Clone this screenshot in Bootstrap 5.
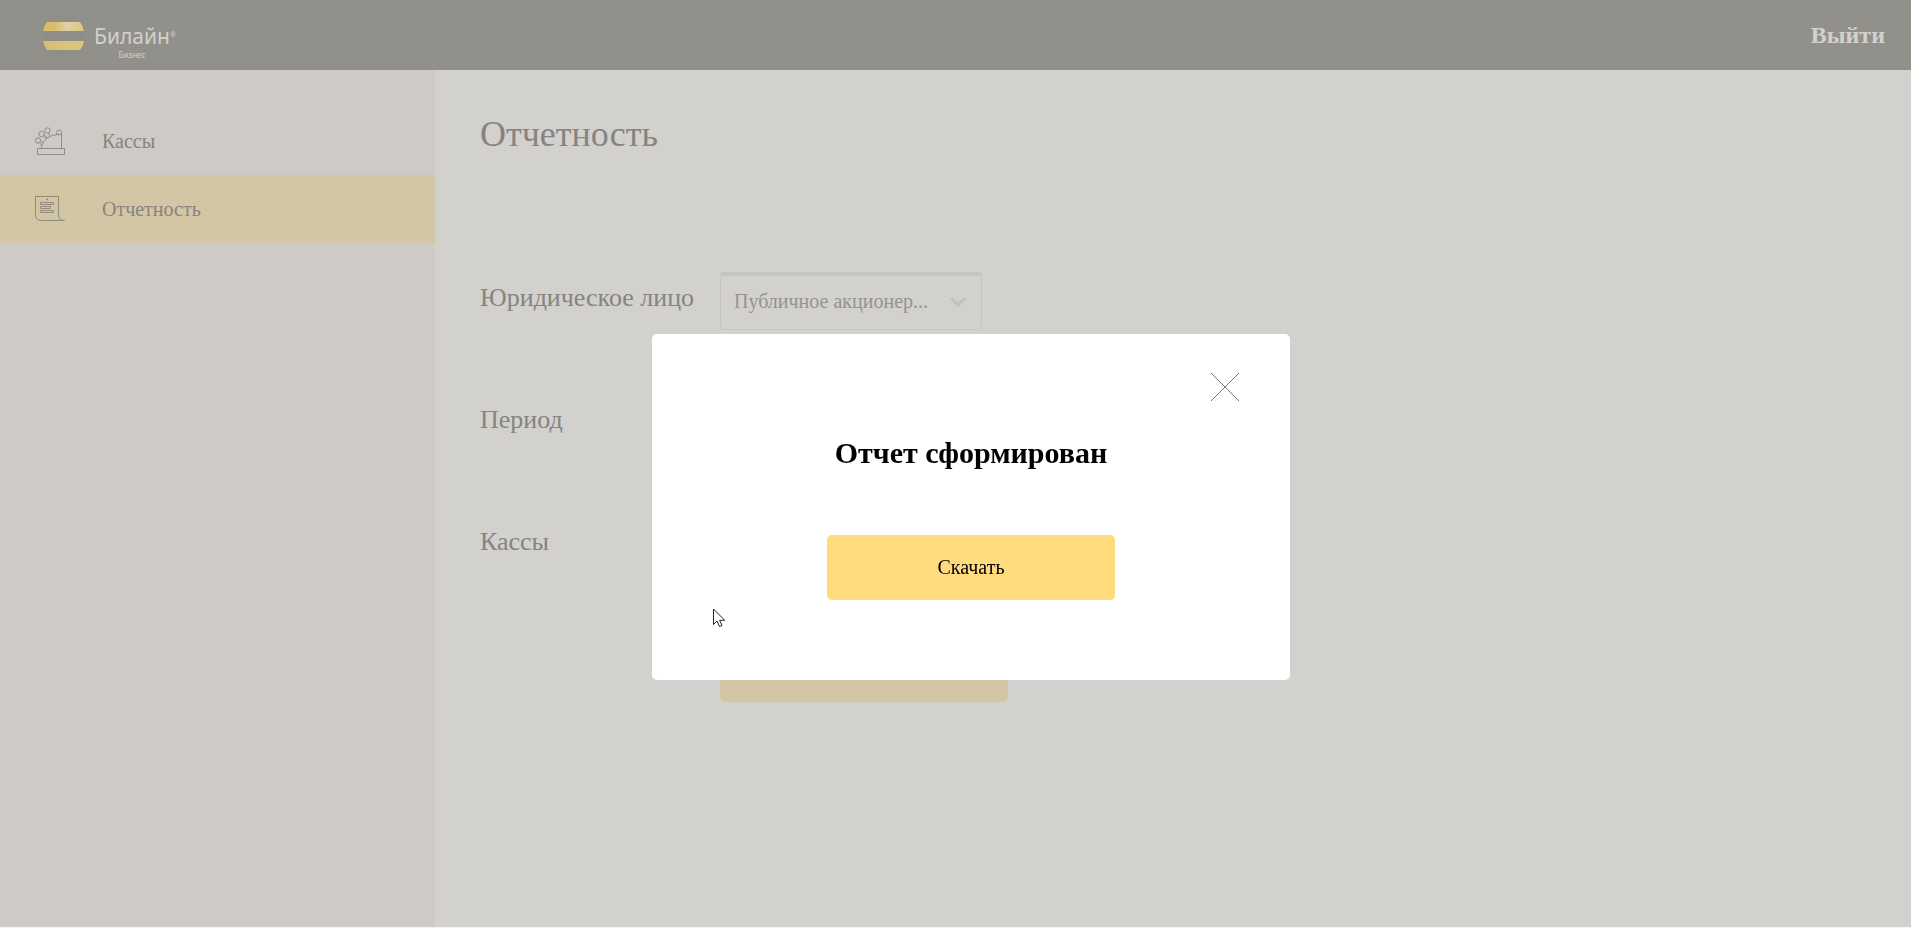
<!DOCTYPE html>
<html lang="ru">
<head>
<meta charset="utf-8">
<meta name="viewport" content="width=device-width, initial-scale=1">
<title>Отчетность</title>
<link rel="stylesheet" href="https://cdn.jsdelivr.net/npm/bootstrap@5.3.0/dist/css/bootstrap.min.css">
<style>
  body { font-family: "Liberation Serif", serif; font-size: 20px; line-height: 24px; color: #85847f; background: #d2d1cd; border-bottom: 1px solid #f4f4f2; }
  .topbar { height: 70px; background: #91908b; padding: 0 26px 0 42px; }
  .brand { color: #d2d1cd; font-family: "Noto Sans", sans-serif; gap: 9px; }
  .brand-text { padding-top: 14px; }
  .brand-name { font-size: 21px; line-height: 26px; }
  .brand-sub { font-size: 8px; line-height: 12px; }
  .brand-mark { font-size: 7px; line-height: 12px; padding-top: 6px; }
  .logout { color: #d2d1cd; font-size: 24px; line-height: 32px; }
  .sidebar { width: 435px; background: #cecac5; padding-top: 37px; }
  .side-link { height: 68px; padding-left: 34px; gap: 36px; color: #85847f; }
  .side-link:hover { color: #85847f; }
  .side-link.active { background: #d3c6a5; }
  .content { padding: 42px 45px; }
  .page-title { font-size: 36px; line-height: 44px; margin-bottom: 116px; font-weight: 400; }
  .field-row { margin-bottom: 64px; min-height: 58px; }
  .field-label { width: 240px; font-size: 26px; line-height: 32px; padding-top: 10px; }
  .field-box { width: 262px; height: 58px; color: #95948f; background-color: transparent; border: 1px solid #c6c5c0; border-top-width: 4px; border-radius: 4px; font-size: 20px; padding: 0 44px 4px 13px; }
  select.field-box { background-image: url("data:image/svg+xml,%3Csvg xmlns='http://www.w3.org/2000/svg' viewBox='0 0 16 16' fill='none' stroke='%23c1c0bb' stroke-width='3'%3E%3Cpath d='M1 3l7 7 7-7'/%3E%3C/svg%3E"); background-position: right 15px center; background-size: 16px; }
  .btn-yellow { width: 288px; height: 65px; border: 0; border-radius: 5px; font-size: 20px; padding-bottom: 2px; background: #ffdb7d; color: #000; }
  .btn-muted { margin: -1px 0 0 240px; background: #d3c6a5; }
  .report-modal { padding: 334px 0 0 31px; }
  .report-modal .modal-dialog { max-width: 638px; margin: 0 auto; }
  .report-modal .modal-content { border: 0; border-radius: 5px; color: #000; padding: 38px 50px 80px; }
  .close-x { line-height: 0; }
  .modal-caption { font-size: 30px; line-height: 36px; margin: 33px 0 64px; }
  .pointer { left: 61px; top: 274px; }
</style>
</head>
<body class="min-vh-100 d-flex flex-column">
<header class="topbar d-flex justify-content-between align-items-center">
  <a href="#" class="brand d-flex align-items-center text-decoration-none">
    <svg width="43" height="44" viewBox="0 0 43 44" aria-hidden="true">
      <defs>
        <linearGradient id="g1"><stop offset="0" stop-color="#d8be6a"/><stop offset=".28" stop-color="#d8bd6c"/><stop offset=".6" stop-color="#dfd2aa"/><stop offset="1" stop-color="#dcc676"/></linearGradient>
        <linearGradient id="g2"><stop offset="0" stop-color="#d7bd73"/><stop offset="1" stop-color="#dcc878"/></linearGradient>
      </defs>
      <circle cx="21.500" cy="22" r="21" fill="#8f8e89"/>
      <path d="M5 9h33q3 4 4 9H1q1-5 4-9z" fill="url(#g1)"/>
      <path d="M1 28h41q-1 5-4 9H5q-3-4-4-9z" fill="url(#g2)"/>
    </svg>
    <span class="brand-text d-flex align-items-start">
      <span class="d-flex flex-column align-items-center">
        <span class="brand-name">Билайн</span>
        <span class="brand-sub">Бизнес</span>
      </span>
      <span class="brand-mark">®</span>
    </span>
  </a>
  <a href="#" class="logout fw-bold text-decoration-none">Выйти</a>
</header>

<div class="d-flex flex-grow-1">
  <nav class="sidebar flex-shrink-0">
    <a href="#" class="side-link d-flex align-items-center text-decoration-none">
      <svg width="32" height="30" viewBox="0 0 32 30" fill="none" stroke="#8f8d88" aria-hidden="true">
        <path d="M3.500 22.500h27v6h-27zM7 22q2-12 18-14M27.500 7v15M7.500 19l-2-2.500M12.500 13l-3-3M16 10.500l-1.500-3.500M6.500 15l3 2M10 9l3.500 3"/>
        <circle cx="4" cy="14.500" r="2.700"/><circle cx="7.500" cy="8" r="2.700"/><circle cx="13.500" cy="4.500" r="2.700"/><circle cx="25" cy="6.500" r="2.500"/>
      </svg>
      <span>Кассы</span>
    </a>
    <a href="#" class="side-link active d-flex align-items-center text-decoration-none">
      <svg width="32" height="28" viewBox="0 0 32 28" fill="none" stroke="#918b7b" aria-hidden="true">
        <path d="M24.500 1.500h-23v18q0 6 6 6h23q-6 0-6-6zM6.500 7.500h13v2h-13zM6.500 11.500h10v2h-10zM6.500 15.500h13v2h-13z"/>
        <path d="M12.500 4h1v1h-1z"/>
      </svg>
      <span>Отчетность</span>
    </a>
  </nav>

  <main class="content flex-grow-1">
    <h1 class="page-title">Отчетность</h1>
    <form>
      <div class="field-row d-flex">
        <label class="field-label" for="entity">Юридическое лицо</label>
        <select class="form-select field-box" id="entity"><option>Публичное акционер...</option></select>
      </div>
      <div class="field-row d-flex">
        <label class="field-label" for="period">Период</label>
        <input class="form-control field-box" id="period" type="text">
      </div>
      <div class="field-row d-flex">
        <label class="field-label" for="desks">Кассы</label>
        <input class="form-control field-box" id="desks" type="text">
      </div>
      <button type="button" class="btn-yellow btn-muted d-block" aria-label="Сформировать"></button>
    </form>
  </main>
</div>

<div class="modal report-modal d-block" role="dialog" aria-labelledby="report-caption">
  <div class="modal-dialog">
    <div class="modal-content align-items-center">
      <button type="button" class="close-x align-self-end border-0 bg-transparent p-0" aria-label="Закрыть">
        <svg width="30" height="30" viewBox="0 0 30 30" stroke="#777" aria-hidden="true"><path d="M1 1l28 28M29 1L1 29"/></svg>
      </button>
      <h2 class="modal-caption fw-bold" id="report-caption">Отчет сформирован</h2>
      <button type="button" class="btn-yellow">Скачать</button>
      <svg class="pointer position-absolute" width="13" height="20" viewBox="0 0 13 20" fill="#fff" stroke="#222" aria-hidden="true"><path d="M.5 1v15.500l3.500-3.500 2.500 5.500 2.500-1-2.300-5.200h5z"/></svg>
    </div>
  </div>
</div>
<script src="https://cdn.jsdelivr.net/npm/bootstrap@5.3.0/dist/js/bootstrap.bundle.min.js"></script>
</body>
</html>
